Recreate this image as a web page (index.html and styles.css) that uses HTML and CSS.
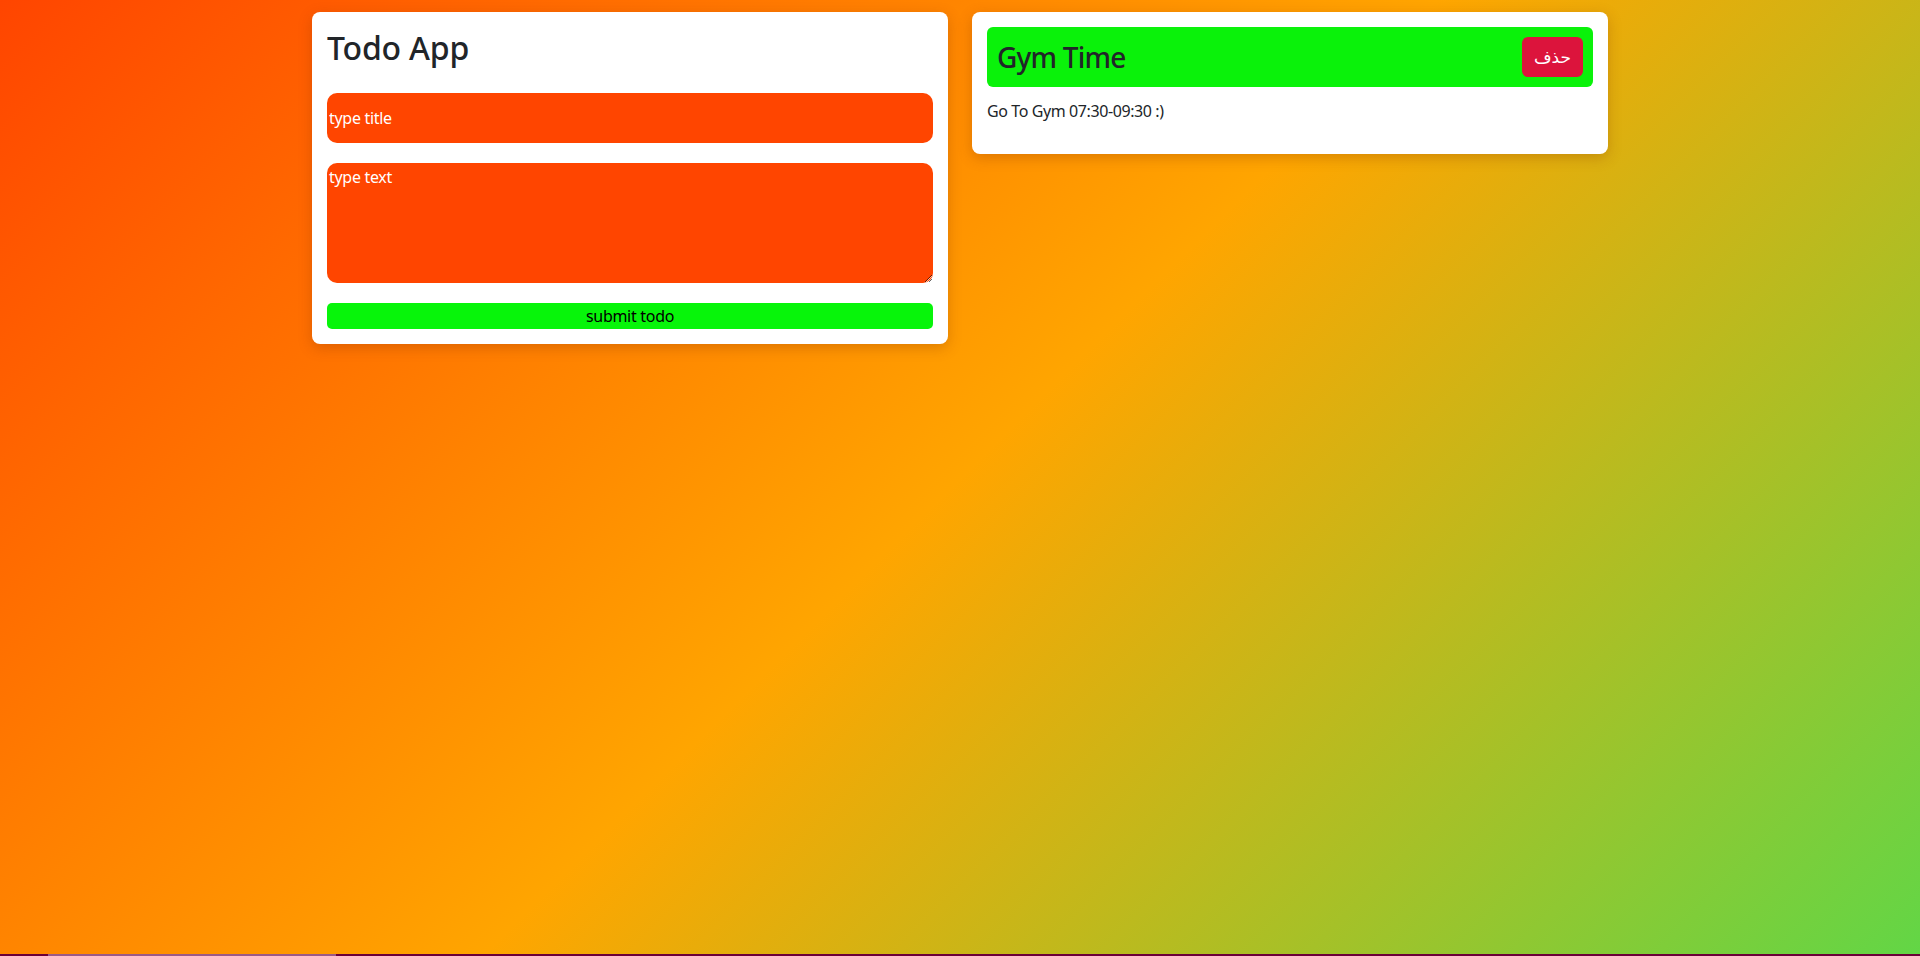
FILE: index.html
```html
<!DOCTYPE html>
<html lang="en">
<head>
<meta charset="utf-8">
<title>Todo App</title>
<link rel="stylesheet" href="styles.css">
</head>
<body>
<div class="container">
  <div class="col">
    <div class="card">
      <h2 class="app-title">Todo App</h2>
      <form class="todo-form">
        <input class="field field-title" type="text" placeholder="type title">
        <textarea class="field field-text" placeholder="type text"></textarea>
        <button type="button" class="submit-btn">submit todo</button>
      </form>
    </div>
  </div>
  <div class="col">
    <div class="card">
      <div class="todo-head">
        <h3 class="todo-title">Gym Time</h3>
        <button type="button" class="delete-btn">حذف</button>
      </div>
      <p class="todo-text">Go To Gym 07:30-09:30 :)</p>
    </div>
  </div>
</div>
<div class="hscroll"><div class="hscroll-thumb"></div></div>
</body>
</html>
```
FILE: styles.css
```css
* { box-sizing: border-box; }
html, body { height: 100%; }
body {
  margin: 0;
  font-family: "Segoe UI", "Noto Sans", "Open Sans", sans-serif;
  color: #212529;
  background: linear-gradient(135deg, #ff4500 0%, #ffa500 50%, #62d646 100%);
  overflow: hidden;
}
.container {
  width: 1320px;
  margin: 0 auto;
  padding: 12px 12px 0;
  display: flex;
  gap: 24px;
  align-items: flex-start;
}
.col { flex: 1 1 0; min-width: 0; }
.card {
  background: #fff;
  border-radius: 8px;
  padding: 15px;
  box-shadow: 0 4px 14px rgba(120, 40, 0, 0.25);
}
.app-title {
  margin: 0 0 24px;
  font-size: 32px;
  font-weight: 500;
  line-height: 42px;
  letter-spacing: -0.2px;
  color: #212529;
}
.todo-form { display: flex; flex-direction: column; gap: 20px; }
.field {
  display: block;
  width: 100%;
  border: none;
  border-radius: 10px;
  background: #ff4500;
  color: #fff;
  font-family: inherit;
  font-size: 16px;
  letter-spacing: -0.3px;
  padding: 0 2px;
  outline: none;
}
.field::placeholder { color: #fff; opacity: 1; }
.field-title { height: 50px; }
.field-text { height: 120px; padding-top: 3px; resize: vertical; }
.submit-btn {
  height: 26px;
  border: none;
  border-radius: 5px;
  background: #07f50a;
  color: #000;
  font-family: inherit;
  font-size: 16px;
  letter-spacing: -0.3px;
  padding: 0;
}
.todo-head {
  display: flex;
  justify-content: space-between;
  align-items: center;
  padding: 10px;
  background: #0af20a;
  border-radius: 6px;
}
.todo-title {
  margin: 0;
  font-size: 28px;
  font-weight: 500;
  line-height: 34px;
  letter-spacing: -0.8px;
  color: #212529;
}
.delete-btn {
  border: none;
  border-radius: 6px;
  background: #dc143c;
  color: #fff;
  font-family: "Segoe UI", "Noto Sans", "DejaVu Sans", sans-serif;
  font-size: 17px;
  line-height: 24px;
  padding: 8px 12px;
}
.todo-text {
  margin: 12px 0 16px;
  font-size: 16px;
  line-height: 24px;
  letter-spacing: -0.4px;
}
.hscroll {
  position: fixed;
  left: 0;
  right: 0;
  bottom: 0;
  height: 2px;
  background: #6b0038;
}
.hscroll-thumb {
  margin-left: 48px;
  width: 288px;
  height: 2px;
  background: #9c5a86;
}
```
